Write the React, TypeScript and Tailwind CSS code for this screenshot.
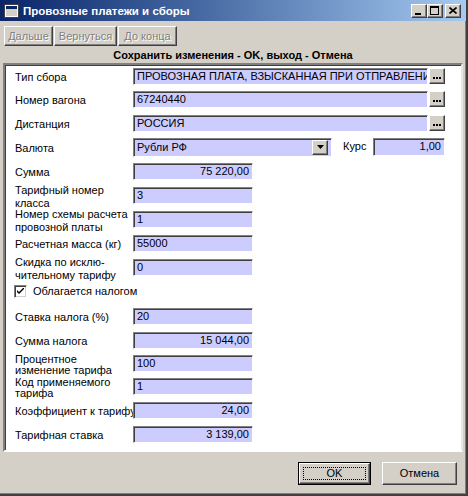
import React from "react";

const font = { fontFamily: '"Liberation Sans", Arial, sans-serif' };

const inputCls =
  "bg-[#ccccff] border-t border-l border-t-[#808080] border-l-[#808080] border-b border-r border-b-white border-r-white shadow-[inset_1px_1px_0_#404040] h-[17px] pl-[3px] pr-[3px] text-[11px] leading-[15px] overflow-hidden whitespace-nowrap text-black";

const raised =
  "bg-[#d4d0c8] border-t border-l border-t-white border-l-white border-b border-r border-b-[#404040] border-r-[#404040] shadow-[inset_-1px_-1px_0_#808080]";

function Dots() {
  return (
    <div className={`${raised} w-[16px] h-[16px] ml-[1px] flex items-end justify-center pb-[4px] gap-[1px] shrink-0`}>
      <div className="w-[2px] h-[2px] bg-black" />
      <div className="w-[2px] h-[2px] bg-black" />
      <div className="w-[2px] h-[2px] bg-black" />
    </div>
  );
}

function Row({
  h,
  label,
  two,
  tight,
  children,
}: {
  h: string;
  label: React.ReactNode;
  two?: boolean;
  tight?: boolean;
  children: React.ReactNode;
}) {
  return (
    <div className={`flex items-center ${h}`}>
      <div
        className={`w-[118px] shrink-0 text-[11px] whitespace-nowrap text-black ${
          tight ? "leading-[11px] mt-[3px]" : two ? "leading-[13px] mt-[4px]" : "leading-[13px] mt-[2px]"
        }`}
      >
        {label}
      </div>
      {children}
    </div>
  );
}

function Short({ v, right }: { v: string; right?: boolean }) {
  return <div className={`${inputCls} w-[120px] ${right ? "text-right" : ""}`}>{v}</div>;
}

export default function App() {
  return (
    <div style={font} className="w-[468px] h-[496px] bg-[#d4d0c8] flex flex-col border-r-2 border-b-2 border-r-[#404040] border-b-[#404040] shadow-[inset_-1px_-1px_0_#808080]">
      {/* Title bar */}
      <div className="h-[21px] shrink-0 flex items-center bg-gradient-to-r from-[#0a246a] to-[#a6caf0] pl-[4px] pr-[5px]">
        <svg width="15" height="14" viewBox="0 0 15 14" className="shrink-0">
          <rect x="0.5" y="0.5" width="14" height="13" fill="#ffffff" stroke="#404040" />
          <rect x="2" y="2" width="11" height="3" fill="#0a246a" />
          <rect x="2" y="5" width="11" height="7" fill="#d4d0c8" />
        </svg>
        <div className="ml-[4px] text-white font-bold text-[11.5px] leading-[14px] whitespace-nowrap">
          Провозные платежи и сборы
        </div>
        <div className="flex-1" />
        <div className={`${raised} w-[16px] h-[14px] relative`}>
          <div className="absolute left-[3px] top-[8px] w-[6px] h-[2px] bg-black" />
        </div>
        <div className={`${raised} w-[16px] h-[14px] relative`}>
          <div className="absolute left-[2px] top-[1px] w-[9px] h-[9px] border border-black border-t-2" />
        </div>
        <div className={`${raised} w-[16px] h-[14px] ml-[2px] flex items-center justify-center`}>
          <svg width="8" height="7" viewBox="0 0 8 7">
            <path d="M0.5 0.5 L7.5 6.5 M7.5 0.5 L0.5 6.5" stroke="#000" strokeWidth="1.6" />
          </svg>
        </div>
      </div>

      {/* Toolbar */}
      <div className="h-[27px] shrink-0 flex items-start pt-[5px] pl-[4px] gap-[1px]">
        {[
          ["Дальше", "w-[49px]"],
          ["Вернуться", "w-[63px]"],
          ["До конца", "w-[59px]"],
        ].map(([t, w]) => (
          <div
            key={t}
            className={`${raised} ${w} h-[20px] flex items-center justify-center text-[11px] text-[#808080] [text-shadow:1px_1px_0_#ffffff]`}
          >
            {t}
          </div>
        ))}
      </div>

      {/* Header */}
      <div className="h-[15px] shrink-0 flex items-center justify-center text-[11px] font-bold text-black leading-[13px]">
        Сохранить изменения - OK, выход - Отмена
      </div>

      {/* Panel */}
      <div className="mx-[3px] h-[389px] shrink-0 bg-white border-t-2 border-l-2 border-t-[#808080] border-l-[#808080] border-b-2 border-r-2 border-b-white border-r-[#e8e6e0] shadow-[inset_1px_1px_0_#404040] pl-[10px] flex flex-col">
        <Row h="h-[22px]" label="Тип сбора">
          <div className={`${inputCls} w-[295px]`}>ПРОВОЗНАЯ ПЛАТА, ВЗЫСКАННАЯ ПРИ ОТПРАВЛЕНИИ</div>
          <Dots />
        </Row>
        <Row h="h-[24px]" label="Номер вагона">
          <div className={`${inputCls} w-[295px]`}>67240440</div>
          <Dots />
        </Row>
        <Row h="h-[24px]" label="Дистанция">
          <div className={`${inputCls} w-[295px]`}>РОССИЯ</div>
          <Dots />
        </Row>
        <Row h="h-[24px]" label="Валюта">
          <div className={`${inputCls} w-[199px] h-[19px] flex items-center justify-between pr-[1px]`}>
            <span>Рубли РФ</span>
            <div className={`${raised} w-[16px] h-[15px] flex items-center justify-center shrink-0`}>
              <svg width="7" height="4" viewBox="0 0 7 4">
                <path d="M0 0 H7 L3.5 4 Z" fill="#000" />
              </svg>
            </div>
          </div>
          <div className="ml-[11px] w-[30px] text-[11px] leading-[13px] mt-[-2px]">Курс</div>
          <div className={`${inputCls} w-[72px] h-[18px] text-right`}>1,00</div>
        </Row>
        <Row h="h-[24px]" label="Сумма">
          <Short v="75 220,00" right />
        </Row>
        <Row h="h-[24px]" two label={<>Тарифный номер<br />класса</>}>
          <Short v="3" />
        </Row>
        <Row h="h-[24px]" two label={<>Номер схемы расчета<br />провозной платы</>}>
          <Short v="1" />
        </Row>
        <Row h="h-[24px]" label="Расчетная масса (кг)">
          <Short v="55000" />
        </Row>
        <Row h="h-[24px]" two label={<>Скидка по исклю-<br />чительному тарифу</>}>
          <Short v="0" />
        </Row>
        <div className="h-[25px] flex items-center">
          <div className="ml-[-1px] w-[13px] h-[13px] bg-white border-t border-l border-t-[#808080] border-l-[#808080] border-b border-r border-b-white border-r-white shadow-[inset_1px_1px_0_#404040,inset_-1px_-1px_0_#d4d0c8] flex items-center justify-center">
            <svg width="7" height="7" viewBox="0 0 7 7">
              <path d="M0 2 L0 4 L2 6 L7 1 L7 -1 L2 4 Z" fill="#000" />
            </svg>
          </div>
          <div className="ml-[6px] text-[11px] leading-[13px]">Облагается налогом</div>
        </div>
        <Row h="h-[24px]" label="Ставка налога (%)">
          <Short v="20" />
        </Row>
        <Row h="h-[24px]" label="Сумма налога">
          <Short v="15 044,00" right />
        </Row>
        <Row h="h-[23px]" two tight label={<>Процентное<br />изменение тарифа</>}>
          <Short v="100" />
        </Row>
        <Row h="h-[23px]" two tight label={<>Код применяемого<br />тарифа</>}>
          <Short v="1" />
        </Row>
        <Row h="h-[24px]" label="Коэффициент к тарифу">
          <Short v="24,00" right />
        </Row>
        <Row h="h-[24px]" label="Тарифная ставка">
          <Short v="3 139,00" right />
        </Row>
      </div>

      {/* Bottom buttons */}
      <div className="flex-1 flex justify-end items-start pt-[10px] pr-[9px] gap-[11px]">
        <div className="w-[73px] h-[23px] border border-black">
          <div className={`${raised} w-full h-full p-[3px]`}>
            <div className="w-full h-full border border-dotted border-black flex items-center justify-center text-[11px]">
              OK
            </div>
          </div>
        </div>
        <div className={`${raised} w-[75px] h-[23px] flex items-center justify-center text-[11px]`}>
          Отмена
        </div>
      </div>
    </div>
  );
}
